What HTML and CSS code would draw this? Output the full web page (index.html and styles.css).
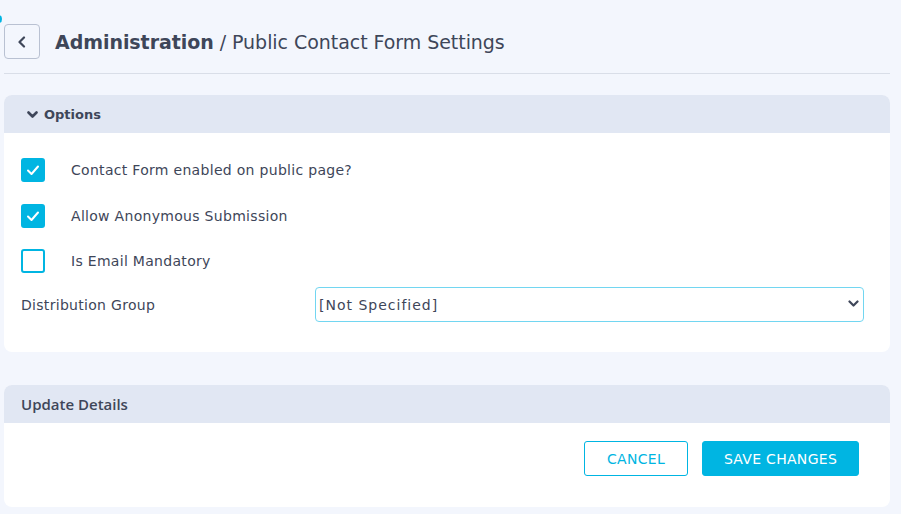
FILE: index.html
```html
<!DOCTYPE html>
<html>
<head>
<meta charset="utf-8">
<link rel="stylesheet" href="styles.css">
</head>
<body>
<span class="dot"></span>
<div class="page">
  <div class="topbar">
    <button class="back" type="button" aria-label="Back">
      <svg width="10" height="12" viewBox="0 0 10 12"><path d="M7 1.5 L2.5 6 L7 10.5" fill="none" stroke="#3e4659" stroke-width="2.2" stroke-linecap="round" stroke-linejoin="round"/></svg>
    </button>
    <h1 class="title"><span class="strong">Administration</span> / Public Contact Form Settings</h1>
  </div>
  <div class="divider"></div>

  <section class="card">
    <div class="card-head">
      <svg class="chev" width="11" height="8" viewBox="0 0 11 8"><path d="M1.5 1.5 L5.5 5.5 L9.5 1.5" fill="none" stroke="#3e4659" stroke-width="2.6" stroke-linecap="round" stroke-linejoin="round"/></svg>
      <span>Options</span>
    </div>
    <div class="card-body options">
      <label class="check-row">
        <span class="box checked"><svg width="14" height="12" viewBox="0 0 14 12"><path d="M2 6.5 L5.5 10 L12 2.5" fill="none" stroke="#fff" stroke-width="2" stroke-linecap="round" stroke-linejoin="round"/></svg></span>
        <span class="label">Contact Form enabled on public page?</span>
      </label>
      <label class="check-row">
        <span class="box checked"><svg width="14" height="12" viewBox="0 0 14 12"><path d="M2 6.5 L5.5 10 L12 2.5" fill="none" stroke="#fff" stroke-width="2" stroke-linecap="round" stroke-linejoin="round"/></svg></span>
        <span class="label">Allow Anonymous Submission</span>
      </label>
      <label class="check-row">
        <span class="box"></span>
        <span class="label">Is Email Mandatory</span>
      </label>
      <div class="field-row">
        <span class="field-label">Distribution Group</span>
        <div class="select-wrap">
          <select class="select"><option>[Not Specified]</option></select>
          <svg class="select-chev" width="11" height="8" viewBox="0 0 11 8"><path d="M1.5 1.5 L5.5 5.5 L9.5 1.5" fill="none" stroke="#3e4659" stroke-width="2.2" stroke-linecap="round" stroke-linejoin="round"/></svg>
        </div>
      </div>
    </div>
  </section>

  <section class="card second">
    <div class="card-head alt"><span>Update Details</span></div>
    <div class="card-body actions">
      <button class="btn outline" type="button">CANCEL</button>
      <button class="btn primary" type="button">SAVE CHANGES</button>
    </div>
  </section>
</div>
</body>
</html>
```
FILE: styles.css
```css
* { box-sizing: border-box; }
html, body { margin: 0; padding: 0; }
body {
  background: #f3f6fd;
  font-family: "DejaVu Sans", "Open Sans", sans-serif;
  color: #3e4659;
  width: 901px;
  height: 514px;
  overflow: hidden;
  position: relative;
}
.dot {
  position: absolute;
  left: -4px;
  top: 15px;
  width: 6px;
  height: 8px;
  border-radius: 50%;
  background: #00b5e2;
}
.page {
  padding: 24px 11px 0 4px;
}
.topbar {
  display: flex;
  align-items: center;
  gap: 15px;
  height: 35px;
}
.back {
  width: 36px;
  height: 35px;
  border: 1px solid #b9c1d2;
  border-radius: 4px;
  background: #f3f6fd;
  display: flex;
  align-items: center;
  justify-content: center;
  padding: 0;
}
.title {
  margin: 0;
  font-size: 19px;
  font-weight: 400;
  letter-spacing: -0.05px;
  color: #3e4659;
}
.title .strong { font-weight: 600; }
.divider {
  margin-top: 14px;
  height: 1px;
  background: #d9dee8;
}
.card {
  margin-top: 21px;
  background: #fff;
  border-radius: 8px;
  overflow: hidden;
}
.card.second { margin-top: 33px; }
.card-head {
  height: 38px;
  background: #e1e7f3;
  display: flex;
  align-items: center;
  gap: 6px;
  padding: 0 0 0 23px;
  font-size: 13px;
  font-weight: 700;
  color: #3e4659;
}
.card-head.alt {
  padding-left: 17px;
  font-family: "Open Sans", sans-serif;
  font-size: 15px;
  font-weight: 600;
}
.chev { margin-top: 1px; }
.options {
  padding: 25px 26px 30px 17px;
}
.check-row {
  display: flex;
  align-items: center;
  height: 24px;
  margin-bottom: 22px;
}
.check-row:nth-child(2) { margin-bottom: 21px; }
.check-row:nth-child(3) { margin-bottom: 14px; }
.box {
  width: 24px;
  height: 24px;
  border-radius: 3px;
  border: 2px solid #00b5e2;
  background: #fff;
  display: flex;
  align-items: center;
  justify-content: center;
  flex: none;
}
.box.checked { background: #00b5e2; }
.label {
  margin-left: 26px;
  font-size: 14px;
  letter-spacing: 0.3px;
  font-weight: 500;
  color: #3e4659;
}
.field-row {
  display: grid;
  grid-template-columns: 294px 1fr;
  align-items: center;
}
.field-label {
  font-size: 14px;
  letter-spacing: 0.3px;
  font-weight: 500;
  color: #3e4659;
}
.select-wrap { position: relative; }
.select {
  appearance: none;
  -webkit-appearance: none;
  width: 100%;
  height: 35px;
  border: 1px solid #72d6f1;
  border-radius: 4px;
  background: #fff;
  padding: 0 30px 0 3px;
  font-family: "DejaVu Sans", sans-serif;
  font-size: 14px;
  letter-spacing: 1px;
  color: #3e4659;
  outline: none;
}
.select-chev {
  position: absolute;
  right: 5px;
  top: 13px;
  pointer-events: none;
}
.actions {
  display: flex;
  justify-content: flex-end;
  gap: 14px;
  padding: 18px 31px 31px 0;
}
.btn {
  height: 35px;
  border-radius: 3px;
  font-family: "DejaVu Sans", sans-serif;
  font-size: 14px;
  letter-spacing: 0.3px;
  padding: 0;
  cursor: pointer;
}
.btn.outline {
  width: 104px;
  border: 1px solid #00b5e2;
  background: #fff;
  color: #00b5e2;
  font-weight: 400;
}
.btn.primary {
  width: 157px;
  border: 1px solid #00b5e2;
  background: #00b5e2;
  color: #fff;
  font-weight: 500;
}
```
